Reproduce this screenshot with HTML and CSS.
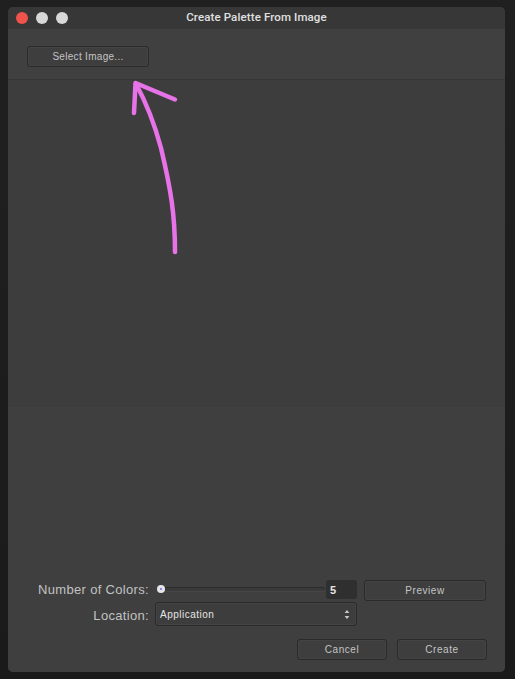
FILE: index.html
```html
<!DOCTYPE html>
<html lang="en">
<head>
    <meta charset="UTF-8">
    <meta name="viewport" content="width=device-width, initial-scale=1.0">
    <title>Create Palette From Image</title>
    <link rel="stylesheet" href="styles.css">
</head>
<body>
    <div class="window">
        <div class="titlebar">
            <div class="traffic">
                <span class="light light-close"></span>
                <span class="light"></span>
                <span class="light"></span>
            </div>
            <div class="title">Create Palette From Image</div>
        </div>

        <div class="top-section">
            <button class="btn btn-select">Select Image...</button>
        </div>

        <div class="preview-section"></div>

        <div class="bottom-section">
            <div class="form-grid">
                <label class="form-label">Number of Colors:</label>
                <div class="slider-row">
                    <div class="slider">
                        <div class="slider-track"></div>
                        <div class="slider-thumb"></div>
                    </div>
                    <div class="number-input">5</div>
                    <button class="btn btn-preview">Preview</button>
                </div>
                <label class="form-label form-label-location">Location:</label>
                <div class="select">
                    <span>Application</span>
                    <svg class="select-arrows" width="6" height="11" viewBox="0 0 6 11">
                        <path d="M3 1 L5.4 4 L0.6 4 Z" fill="#c8c8c8"/>
                        <path d="M3 10 L5.4 7 L0.6 7 Z" fill="#c8c8c8"/>
                    </svg>
                </div>
            </div>
            <div class="actions">
                <button class="btn btn-action">Cancel</button>
                <button class="btn btn-action">Create</button>
            </div>
        </div>
    </div>

    <!-- hand-drawn annotation over the dialog -->
    <svg class="annotation" width="515" height="679" viewBox="0 0 515 679">
        <path d="M175 252 C175 215 171 190 161 148 C154 122 147 104 136 84" />
        <path d="M134 113 L135.500 83 L175 99.500" />
    </svg>
</body>
</html>
```

FILE: styles.css
```css
* {
    margin: 0;
    padding: 0;
    box-sizing: border-box;
    font-family: 'Liberation Sans', Arial, sans-serif;
}

body {
    width: 515px;
    height: 679px;
    overflow: hidden;
    background: linear-gradient(180deg, #202020 0%, #1a1a1a 100%);
    padding: 7px 10px 7px 8px;
    position: relative;
}

.window {
    height: 665px;
    background: #3e3e3e;
    border-radius: 5px;
    display: flex;
    flex-direction: column;
    overflow: hidden;
}

.titlebar {
    height: 22px;
    flex: none;
    background: #373737;
    display: flex;
    align-items: center;
    padding-left: 8px;
}

.traffic {
    display: flex;
    gap: 8px;
}

.light {
    width: 12px;
    height: 12px;
    border-radius: 50%;
    background: #d8d8d8;
}

.light-close {
    background: #f0524c;
}

.title {
    flex: 1;
    text-align: center;
    color: #e0e0e0;
    font-family: Roboto, 'Liberation Sans', sans-serif;
    font-size: 11.500px;
    font-weight: 500;
    letter-spacing: 0.12px;
    margin-left: -60px;
    padding-bottom: 2px;
}

.btn {
    height: 21px;
    background: #3e3e3e;
    border: 1px solid #2a2a2a;
    border-radius: 3px;
    color: #c4c4c4;
    font-size: 10px;
    letter-spacing: 0.55px;
    box-shadow: inset 0 0 0 1px #444444;
}

.top-section {
    height: 51px;
    flex: none;
    padding: 17px 0 0 19px;
    background: #404040;
    border-bottom: 1px solid #363636;
}

.btn-select {
    width: 122px;
    letter-spacing: 0.3px;
}

.preview-section {
    height: 326px;
    flex: none;
    background: #3d3d3d;
    border-bottom: 1px solid #393939;
}

.bottom-section {
    flex: 1;
    background: #3f3f3f;
    padding: 174px 18px 0 30px;
}

.form-grid {
    display: grid;
    grid-template-columns: 111px 1fr;
    column-gap: 6px;
    row-gap: 1px;
}

.form-label {
    color: #c2c2c2;
    font-size: 13px;
    letter-spacing: 0.32px;
    line-height: 20px;
    white-space: nowrap;
    display: flex;
    justify-content: flex-end;
}

.form-label-location {
    align-items: center;
    padding-top: 3px;
}

.slider-row {
    display: flex;
    align-items: flex-start;
    height: 21px;
}

.slider {
    width: 171px;
    height: 19px;
    flex: none;
    position: relative;
}

.slider-track {
    position: absolute;
    left: 2px;
    right: 1px;
    top: 7px;
    height: 5px;
    border-radius: 3px;
    border-top: 1px solid #2b2b2b;
    background: #3a3a3a;
    border-bottom: 1px solid #464646;
}

.slider-thumb {
    position: absolute;
    left: 2px;
    top: 5px;
    width: 8px;
    height: 8px;
    border-radius: 50%;
    background: radial-gradient(circle, #8f86e0 0 1px, #e6e6e6 1.500px);
}

.number-input {
    width: 31px;
    height: 19px;
    flex: none;
    background: #2f2f2f;
    border-radius: 3px;
    color: #e4e4e4;
    font-size: 11px;
    font-weight: 700;
    line-height: 21px;
    padding-left: 4px;
}

.btn-preview {
    width: 122px;
    margin-left: 7px;
}

.select {
    width: 202px;
    height: 24px;
    background: #3d3d3d;
    border: 1px solid #2a2a2a;
    border-radius: 3px;
    display: flex;
    align-items: center;
    justify-content: space-between;
    padding: 0 6px 0 4px;
    color: #e6e6e6;
    font-size: 10px;
    box-shadow: inset 0 0 0 1px #444444;
}

.select span {
    letter-spacing: 0.5px;
}

.actions {
    display: flex;
    justify-content: flex-end;
    gap: 10px;
    margin-top: 13px;
}

.btn-action {
    width: 90px;
}

.annotation {
    position: absolute;
    left: 0;
    top: 0;
    fill: none;
    stroke: #e873e8;
    stroke-width: 4.500;
    stroke-linecap: round;
    stroke-linejoin: round;
}
```
